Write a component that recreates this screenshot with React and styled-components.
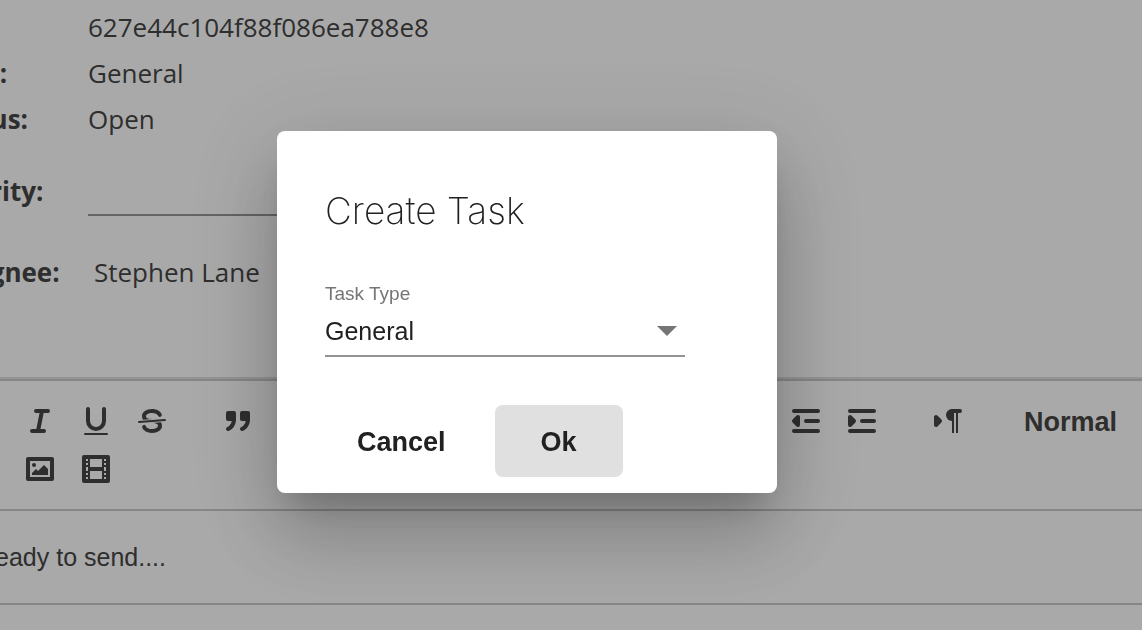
import React from 'react';
import styled, { createGlobalStyle } from 'styled-components';

const sans = '"Liberation Sans", Arial, sans-serif';

const GlobalStyle = createGlobalStyle`
    *, *::before, *::after {
        box-sizing: border-box;
    }
    body {
        margin: 0;
        background: #fafafa;
        color: #444;
        font-family: ${sans};
        overflow: hidden;
    }
`;

/* toolbar icons, all on an 18x18 grid */
const icons = {
    bold: (
        <>
            <path className="stroke" d="M5,4H9.5A2.5,2.5,0,0,1,12,6.5v0A2.5,2.5,0,0,1,9.5,9H5V4Z" />
            <path className="stroke" d="M5,9h5.5A2.5,2.5,0,0,1,13,11.5v0A2.5,2.5,0,0,1,10.5,14H5V9Z" />
        </>
    ),
    italic: (
        <>
            <line className="stroke" x1="7" x2="13" y1="4" y2="4" />
            <line className="stroke" x1="5" x2="11" y1="14" y2="14" />
            <line className="stroke" x1="8" x2="10" y1="14" y2="4" />
        </>
    ),
    underline: (
        <>
            <path className="stroke" d="M5,3V9a4.012,4.012,0,0,0,4,4H9a4.012,4.012,0,0,0,4-4V3" />
            <rect className="fill" height="1" rx="0.5" ry="0.5" width="12" x="3" y="15" />
        </>
    ),
    strike: (
        <>
            <line className="stroke thin" x1="15.5" x2="2.5" y1="8.5" y2="9.5" />
            <path className="fill" d="M9.007,8C6.542,7.791,6,7.519,6,6.5,6,5.792,7.283,5,9,5c1.571,0,2.765.679,2.969,1.309a1,1,0,0,0,1.9-.617C13.356,4.106,11.354,3,9,3,6.2,3,4,4.538,4,6.5a3.2,3.2,0,0,0,.5,1.843Z" />
            <path className="fill" d="M8.984,10C11.457,10.208,12,10.479,12,11.5c0,0.708-1.283,1.5-3,1.5-1.571,0-2.765-.679-2.969-1.309a1,1,0,1,0-1.9.617C4.644,13.894,6.646,15,9,15c2.8,0,5-1.538,5-3.5a3.2,3.2,0,0,0-.5-1.843Z" />
        </>
    ),
    blockquote: (
        <>
            <rect className="fill stroke" height="3" width="3" x="4" y="5" />
            <rect className="fill stroke" height="3" width="3" x="11" y="5" />
            <path className="fill stroke" d="M7,8c0,4.031-3,5-3,5" />
            <path className="fill stroke" d="M14,8c0,4.031-3,5-3,5" />
        </>
    ),
    code: (
        <>
            <polyline className="stroke" points="5 7 3 9 5 11" />
            <polyline className="stroke" points="13 7 15 9 13 11" />
            <line className="stroke" x1="10" x2="8" y1="5" y2="13" />
        </>
    ),
    heading: (
        <>
            <line className="stroke" x1="3" x2="3" y1="4" y2="14" />
            <line className="stroke" x1="11" x2="11" y1="4" y2="14" />
            <line className="stroke" x1="11" x2="3" y1="9" y2="9" />
        </>
    ),
    list: (
        <>
            <line className="stroke" x1="7" x2="15" y1="4" y2="4" />
            <line className="stroke" x1="7" x2="15" y1="9" y2="9" />
            <line className="stroke" x1="7" x2="15" y1="14" y2="14" />
        </>
    ),
    script: (
        <>
            <line className="stroke" x1="4" x2="10" y1="5" y2="12" />
            <line className="stroke" x1="10" x2="4" y1="5" y2="12" />
        </>
    ),
    outdent: (
        <>
            <line className="stroke" x1="3" x2="15" y1="14" y2="14" />
            <line className="stroke" x1="3" x2="15" y1="4" y2="4" />
            <line className="stroke" x1="9" x2="15" y1="9" y2="9" />
            <polyline className="fill stroke" points="5 7 5 11 3 9 5 7" />
        </>
    ),
    indent: (
        <>
            <line className="stroke" x1="3" x2="15" y1="14" y2="14" />
            <line className="stroke" x1="3" x2="15" y1="4" y2="4" />
            <line className="stroke" x1="9" x2="15" y1="9" y2="9" />
            <polyline className="fill stroke" points="3 7 3 11 5 9 3 7" />
        </>
    ),
    direction: (
        <>
            <polygon className="fill stroke" points="3 11 5 9 3 7 3 11" />
            <line className="fill stroke" x1="15" x2="11" y1="4" y2="4" />
            <path className="fill" d="M11,3a3,3,0,0,0,0,6h1V3H11Z" />
            <rect className="fill" height="11" width="1" x="11" y="4" />
            <rect className="fill" height="11" width="1" x="13" y="4" />
        </>
    ),
    link: (
        <>
            <line className="stroke" x1="7" x2="11" y1="7" y2="11" />
            <path className="stroke" d="M8.9,4.577a3.476,3.476,0,0,1,.36,4.679A3.476,3.476,0,0,1,4.577,8.9C3.185,7.5,2.035,6.4,4.217,4.217S7.5,3.185,8.9,4.577Z" />
        </>
    ),
    image: (
        <>
            <rect className="stroke" height="10" width="12" x="3" y="4" />
            <circle className="fill" cx="6" cy="7" r="1" />
            <polyline className="fill" points="5 12 5 11 7 9 8 10 11 7 13 9 13 12 5 12" />
        </>
    ),
    video: (
        <>
            <rect className="stroke" height="12" width="12" x="3" y="3" />
            <rect className="fill" height="12" width="1" x="5" y="3" />
            <rect className="fill" height="12" width="1" x="12" y="3" />
            <rect className="fill" height="2" width="8" x="5" y="8" />
            {[5, 7, 10, 12].map((y) => (
                <React.Fragment key={y}>
                    <rect className="fill" height="1" width="3" x="3" y={y} />
                    <rect className="fill" height="1" width="3" x="12" y={y} />
                </React.Fragment>
            ))}
        </>
    ),
};

const toolGroups = [
    ['bold', 'italic', 'underline', 'strike'],
    ['blockquote', 'code'],
    ['heading', 'heading'],
    ['list', 'list'],
    ['script', 'script'],
    ['outdent', 'indent'],
    ['direction'],
];

const ToolGroup = ({ names }) => (
    <Group>
        {names.map((name, i) => (
            <ToolButton type="button" aria-label={name} key={name + i}>
                <ToolIcon viewBox="0 0 18 18">{icons[name]}</ToolIcon>
            </ToolButton>
        ))}
    </Group>
);

const App = () => {
    return (
        <>
            <GlobalStyle />
            <Page>
                <Details>
                    <Row>
                        <Term>ID:</Term>
                        <Value>627e44c104f88f086ea788e8</Value>
                    </Row>
                    <Row>
                        <Term>Type:</Term>
                        <Value>General</Value>
                    </Row>
                    <Row>
                        <Term>Status:</Term>
                        <Value>Open</Value>
                    </Row>
                    <Row $height={98}>
                        <Term>
                            <label htmlFor="priority">Priority:</label>
                        </Term>
                        <Value>
                            <PrioritySelect id="priority" />
                        </Value>
                    </Row>
                    <Row $height={64}>
                        <Term>Assignee:</Term>
                        <Value $indent>Stephen Lane</Value>
                    </Row>
                </Details>
                <Toolbar>
                    <ToolRow>
                        {toolGroups.map((names, i) => (
                            <ToolGroup names={names} key={i} />
                        ))}
                        <Picker type="button">Normal</Picker>
                    </ToolRow>
                    <ToolRow>
                        <ToolGroup names={['link', 'image', 'video']} />
                    </ToolRow>
                </Toolbar>
                <Editor aria-label="Message" rows={1} defaultValue="Ready to send...." />
            </Page>
            <Backdrop>
                <Dialog role="dialog" aria-modal="true" aria-labelledby="dialog-title">
                    <Title id="dialog-title">Create Task</Title>
                    <Field>
                        <FieldLabel htmlFor="task-type">Task Type</FieldLabel>
                        <SelectBox>
                            <Select id="task-type" defaultValue="General">
                                <option>General</option>
                            </Select>
                            <Arrow viewBox="0 0 20 10">
                                <path d="M0 0h20L10 10z" />
                            </Arrow>
                        </SelectBox>
                    </Field>
                    <Actions>
                        <Button type="button">Cancel</Button>
                        <Button type="button" $filled>Ok</Button>
                    </Actions>
                </Dialog>
            </Backdrop>
        </>
    );
};

/* the page is scrolled sideways under the dialog */
const Page = styled.main`
    margin-left: -64px;
`;

const Details = styled.dl`
    margin: 0;
    padding: 4px 0 73px;
    border-bottom: 2px solid #dbdbdb;
    font-family: "Open Sans", "Noto Sans", sans-serif;
    font-size: 26px;
    line-height: 36px;
`;

const Row = styled.div`
    display: flex;
    align-items: center;
    height: ${({ $height }) => $height || 46}px;
`;

const Term = styled.dt`
    flex: 0 0 152px;
    padding-left: 2px;
    font-weight: 700;
`;

const Value = styled.dd`
    flex: 1;
    margin: 0;
    padding-left: ${({ $indent }) => ($indent ? 6 : 0)}px;
`;

const PrioritySelect = styled.select`
    display: block;
    appearance: none;
    width: 360px;
    height: 50px;
    border: 0;
    border-bottom: 2px solid #949494;
    border-radius: 0;
    background: transparent;
    font: inherit;
`;

const Toolbar = styled.div`
    padding: 16px 20px;
    border: solid #c6c6c6;
    border-width: 2px 0;
`;

const ToolRow = styled.div`
    display: flex;
    gap: 30px;
`;

const Group = styled.div`
    display: flex;
`;

const ToolButton = styled.button`
    display: flex;
    width: 56px;
    height: 48px;
    padding: 6px 10px;
    border: 0;
    background: none;
`;

const ToolIcon = styled.svg`
    width: 36px;
    height: 36px;
    fill: none;

    .stroke {
        stroke: #444;
        stroke-width: 2;
        stroke-linecap: round;
        stroke-linejoin: round;
    }
    .thin {
        stroke-width: 1;
    }
    .fill {
        fill: #444;
    }
`;

const Picker = styled.button`
    flex: none;
    width: 196px;
    height: 48px;
    padding: 2px 18px 0;
    border: 0;
    background: none;
    color: #444;
    font: 700 27px/46px ${sans};
    text-align: left;
`;

const Editor = styled.textarea`
    display: block;
    width: 100%;
    height: 94px;
    padding: 28px 41px;
    border: 0;
    border-bottom: 2px solid #c6c6c6;
    background: transparent;
    color: #444;
    font: 25px/36px ${sans};
    resize: none;
    overflow: hidden;
`;

const Backdrop = styled.div`
    position: fixed;
    inset: 0;
    display: flex;
    align-items: center;
    justify-content: center;
    padding: 0 88px 6px 0;
    background: rgba(0, 0, 0, 0.32);
`;

const Dialog = styled.section`
    width: 500px;
    padding: 48px 48px 16px;
    border-radius: 8px;
    background: #fff;
    color: #212121;
    box-shadow: 0 22px 30px -14px rgba(0, 0, 0, 0.2), 0 48px 76px 6px rgba(0, 0, 0, 0.14),
        0 18px 92px 16px rgba(0, 0, 0, 0.12);
`;

const Title = styled.h1`
    margin: 0 0 40px;
    font: 200 37px/64px Inter, ${sans};
`;

const Field = styled.div`
    width: 360px;
    margin-bottom: 48px;
`;

const FieldLabel = styled.label`
    display: block;
    color: #757575;
    font-size: 19px;
    line-height: 22px;
`;

const SelectBox = styled.div`
    display: grid;
    align-items: center;
    padding-top: 2px;
    border-bottom: 2px solid #949494;
`;

const Select = styled.select`
    grid-area: 1 / 1;
    appearance: none;
    width: 100%;
    height: 48px;
    padding: 0;
    border: 0;
    background: transparent;
    color: #212121;
    font: 25px/48px ${sans};
`;

const Arrow = styled.svg`
    grid-area: 1 / 1;
    justify-self: end;
    width: 20px;
    height: 10px;
    margin-right: 8px;
    fill: #757575;
    pointer-events: none;
`;

const Actions = styled.div`
    display: flex;
    gap: 17px;
`;

const Button = styled.button`
    min-width: 128px;
    padding: 2px 32px 0;
    border: 0;
    border-radius: 8px;
    background: ${({ $filled }) => ($filled ? '#e0e0e0' : 'transparent')};
    color: #212121;
    font: 700 27px/70px ${sans};
`;

export default App;
